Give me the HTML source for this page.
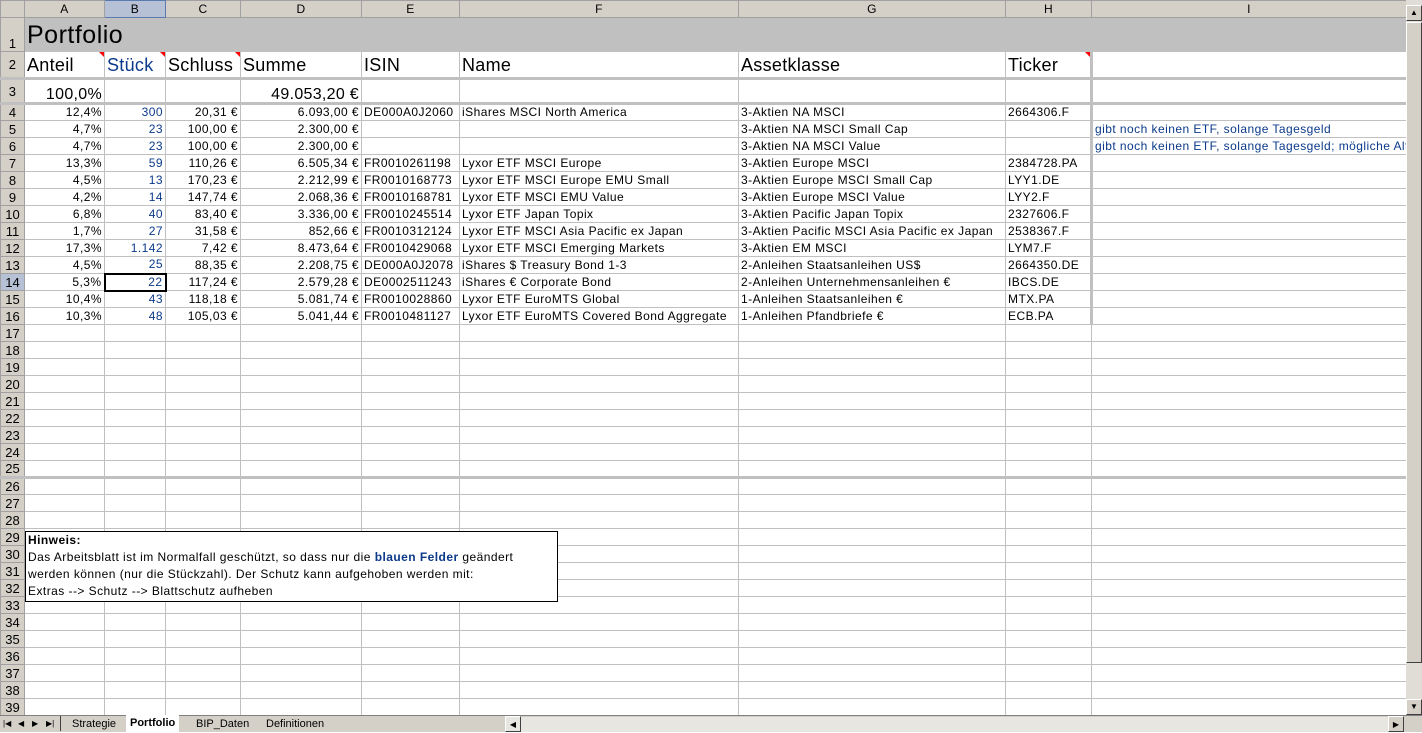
<!DOCTYPE html>
<html><head><meta charset="utf-8"><style>
*{margin:0;padding:0;box-sizing:border-box}
body{width:1422px;height:732px;overflow:hidden;background:#fff;font-family:"Liberation Sans",Arial,sans-serif;position:relative}
table{position:absolute;left:0;top:0;border-collapse:collapse;table-layout:fixed;width:1406px}
td{border:1px solid #c0c0c0;font-size:12px;letter-spacing:0.45px;padding:0 2px;white-space:nowrap;overflow:hidden;height:17px;line-height:15px;color:#000}
td.h{background:#d4d0c8;border:1px solid #a0a0a0;text-align:center;font-size:13px;letter-spacing:0;color:#000;padding:0}
tr.ch td{background:#d4d0c8;border:1px solid #a0a0a0;text-align:center;font-size:12px;height:17px;padding:0}
td.r{text-align:right}
.b{color:#0b3a8a}
tr.r1 td{height:34px}
tr.r2 td{height:27px;font-size:18px;letter-spacing:0.3px;line-height:24px;vertical-align:bottom}
tr.r3 td{height:25px;font-size:16px;letter-spacing:0.3px;border-top:3px solid #c0c0c0;border-bottom:3px solid #c0c0c0;vertical-align:bottom}
tr.r26 td{border-top:3px solid #c0c0c0}
.tri{position:relative}
.tri:after{content:"";position:absolute;right:0;top:0;border-top:5px solid #f00;border-left:5px solid transparent}
.tab{position:absolute;top:0;height:17px}
</style></head><body>
<table>
<colgroup><col style="width:24px"><col style="width:80px"><col style="width:61px"><col style="width:75px"><col style="width:121px"><col style="width:98px"><col style="width:279px"><col style="width:267px"><col style="width:86px"><col style="width:315px"></colgroup>
<tr class="ch"><td></td><td>A</td><td style="background:#b6c1d6;border-color:#5a7ab0">B</td><td>C</td><td>D</td><td>E</td><td>F</td><td>G</td><td>H</td><td>I</td></tr>
<tr class="r1"><td class="h" style="vertical-align:bottom">1</td><td colspan="9" style="background:#c0c0c0;border-color:#c0c0c0;font-size:25px;letter-spacing:0.5px;line-height:30px">Portfolio</td></tr>
<tr class="r2"><td class="h" style="font-size:13px;vertical-align:middle">2</td><td class="tri">Anteil</td><td class="tri b">Stück</td><td class="tri">Schluss</td><td>Summe</td><td>ISIN</td><td>Name</td><td>Assetklasse</td><td class="tri">Ticker</td><td style="border-left:3px solid #c0c0c0"></td></tr>
<tr class="r3"><td class="h" style="font-size:13px;vertical-align:middle">3</td><td class="r">100,0%</td><td></td><td></td><td class="r">49.053,20 €</td><td></td><td></td><td></td><td></td><td style="border-left:3px solid #c0c0c0"></td></tr>
<tr><td class="h">4</td><td class="r">12,4%</td><td class="r b">300</td><td class="r">20,31 €</td><td class="r">6.093,00 €</td><td>DE000A0J2060</td><td>iShares MSCI North America</td><td>3-Aktien NA MSCI</td><td>2664306.F</td><td style="border-left:3px solid #c0c0c0"></td></tr>
<tr><td class="h">5</td><td class="r">4,7%</td><td class="r b">23</td><td class="r">100,00 €</td><td class="r">2.300,00 €</td><td></td><td></td><td>3-Aktien NA MSCI Small Cap</td><td></td><td class="b" style="border-left:3px solid #c0c0c0">gibt noch keinen ETF, solange Tagesgeld</td></tr>
<tr><td class="h">6</td><td class="r">4,7%</td><td class="r b">23</td><td class="r">100,00 €</td><td class="r">2.300,00 €</td><td></td><td></td><td>3-Aktien NA MSCI Value</td><td></td><td class="b" style="border-left:3px solid #c0c0c0">gibt noch keinen ETF, solange Tagesgeld; mögliche Alternative</td></tr>
<tr><td class="h">7</td><td class="r">13,3%</td><td class="r b">59</td><td class="r">110,26 €</td><td class="r">6.505,34 €</td><td>FR0010261198</td><td>Lyxor ETF MSCI Europe</td><td>3-Aktien Europe MSCI</td><td>2384728.PA</td><td style="border-left:3px solid #c0c0c0"></td></tr>
<tr><td class="h">8</td><td class="r">4,5%</td><td class="r b">13</td><td class="r">170,23 €</td><td class="r">2.212,99 €</td><td>FR0010168773</td><td>Lyxor ETF MSCI Europe EMU Small</td><td>3-Aktien Europe MSCI Small Cap</td><td>LYY1.DE</td><td style="border-left:3px solid #c0c0c0"></td></tr>
<tr><td class="h">9</td><td class="r">4,2%</td><td class="r b">14</td><td class="r">147,74 €</td><td class="r">2.068,36 €</td><td>FR0010168781</td><td>Lyxor ETF MSCI EMU Value</td><td>3-Aktien Europe MSCI Value</td><td>LYY2.F</td><td style="border-left:3px solid #c0c0c0"></td></tr>
<tr><td class="h">10</td><td class="r">6,8%</td><td class="r b">40</td><td class="r">83,40 €</td><td class="r">3.336,00 €</td><td>FR0010245514</td><td>Lyxor ETF Japan Topix</td><td>3-Aktien Pacific Japan Topix</td><td>2327606.F</td><td style="border-left:3px solid #c0c0c0"></td></tr>
<tr><td class="h">11</td><td class="r">1,7%</td><td class="r b">27</td><td class="r">31,58 €</td><td class="r">852,66 €</td><td>FR0010312124</td><td>Lyxor ETF MSCI Asia Pacific ex Japan</td><td>3-Aktien Pacific MSCI Asia Pacific ex Japan</td><td>2538367.F</td><td style="border-left:3px solid #c0c0c0"></td></tr>
<tr><td class="h">12</td><td class="r">17,3%</td><td class="r b">1.142</td><td class="r">7,42 €</td><td class="r">8.473,64 €</td><td>FR0010429068</td><td>Lyxor ETF MSCI Emerging Markets</td><td>3-Aktien EM MSCI</td><td>LYM7.F</td><td style="border-left:3px solid #c0c0c0"></td></tr>
<tr><td class="h">13</td><td class="r">4,5%</td><td class="r b">25</td><td class="r">88,35 €</td><td class="r">2.208,75 €</td><td>DE000A0J2078</td><td>iShares $ Treasury Bond 1-3</td><td>2-Anleihen Staatsanleihen US$</td><td>2664350.DE</td><td style="border-left:3px solid #c0c0c0"></td></tr>
<tr><td class="h" style="background:#b6c1d6">14</td><td class="r">5,3%</td><td class="r b" style="border:2px solid #000">22</td><td class="r">117,24 €</td><td class="r">2.579,28 €</td><td>DE0002511243</td><td>iShares € Corporate Bond</td><td>2-Anleihen Unternehmensanleihen €</td><td>IBCS.DE</td><td style="border-left:3px solid #c0c0c0"></td></tr>
<tr><td class="h">15</td><td class="r">10,4%</td><td class="r b">43</td><td class="r">118,18 €</td><td class="r">5.081,74 €</td><td>FR0010028860</td><td>Lyxor ETF EuroMTS Global</td><td>1-Anleihen Staatsanleihen €</td><td>MTX.PA</td><td style="border-left:3px solid #c0c0c0"></td></tr>
<tr><td class="h">16</td><td class="r">10,3%</td><td class="r b">48</td><td class="r">105,03 €</td><td class="r">5.041,44 €</td><td>FR0010481127</td><td>Lyxor ETF EuroMTS Covered Bond Aggregate</td><td>1-Anleihen Pfandbriefe €</td><td>ECB.PA</td><td style="border-left:3px solid #c0c0c0"></td></tr>
<tr><td class="h">17</td><td></td><td></td><td></td><td></td><td></td><td></td><td></td><td></td><td></td></tr>
<tr><td class="h">18</td><td></td><td></td><td></td><td></td><td></td><td></td><td></td><td></td><td></td></tr>
<tr><td class="h">19</td><td></td><td></td><td></td><td></td><td></td><td></td><td></td><td></td><td></td></tr>
<tr><td class="h">20</td><td></td><td></td><td></td><td></td><td></td><td></td><td></td><td></td><td></td></tr>
<tr><td class="h">21</td><td></td><td></td><td></td><td></td><td></td><td></td><td></td><td></td><td></td></tr>
<tr><td class="h">22</td><td></td><td></td><td></td><td></td><td></td><td></td><td></td><td></td><td></td></tr>
<tr><td class="h">23</td><td></td><td></td><td></td><td></td><td></td><td></td><td></td><td></td><td></td></tr>
<tr><td class="h">24</td><td></td><td></td><td></td><td></td><td></td><td></td><td></td><td></td><td></td></tr>
<tr><td class="h">25</td><td></td><td></td><td></td><td></td><td></td><td></td><td></td><td></td><td></td></tr>
<tr class="r26"><td class="h">26</td><td></td><td></td><td></td><td></td><td></td><td></td><td></td><td></td><td></td></tr>
<tr><td class="h">27</td><td></td><td></td><td></td><td></td><td></td><td></td><td></td><td></td><td></td></tr>
<tr><td class="h">28</td><td></td><td></td><td></td><td></td><td></td><td></td><td></td><td></td><td></td></tr>
<tr><td class="h">29</td><td></td><td></td><td></td><td></td><td></td><td></td><td></td><td></td><td></td></tr>
<tr><td class="h">30</td><td></td><td></td><td></td><td></td><td></td><td></td><td></td><td></td><td></td></tr>
<tr><td class="h">31</td><td></td><td></td><td></td><td></td><td></td><td></td><td></td><td></td><td></td></tr>
<tr><td class="h">32</td><td></td><td></td><td></td><td></td><td></td><td></td><td></td><td></td><td></td></tr>
<tr><td class="h">33</td><td></td><td></td><td></td><td></td><td></td><td></td><td></td><td></td><td></td></tr>
<tr><td class="h">34</td><td></td><td></td><td></td><td></td><td></td><td></td><td></td><td></td><td></td></tr>
<tr><td class="h">35</td><td></td><td></td><td></td><td></td><td></td><td></td><td></td><td></td><td></td></tr>
<tr><td class="h">36</td><td></td><td></td><td></td><td></td><td></td><td></td><td></td><td></td><td></td></tr>
<tr><td class="h">37</td><td></td><td></td><td></td><td></td><td></td><td></td><td></td><td></td><td></td></tr>
<tr><td class="h">38</td><td></td><td></td><td></td><td></td><td></td><td></td><td></td><td></td><td></td></tr>
<tr><td class="h">39</td><td></td><td></td><td></td><td></td><td></td><td></td><td></td><td></td><td></td></tr>
</table>
<div style="position:absolute;left:25px;top:531px;width:533px;height:71px;border:1px solid #000;background:#fff;font-size:12px;letter-spacing:0.45px;line-height:17px;padding:0 2px">
<b>Hinweis:</b><br>Das Arbeitsblatt ist im Normalfall geschützt, so dass nur die <b style="color:#0b3a8a">blauen Felder</b> geändert<br>werden können (nur die Stückzahl). Der Schutz kann aufgehoben werden mit:<br>Extras --&gt; Schutz --&gt; Blattschutz aufheben</div>
<div style="position:absolute;left:1406px;top:0;width:16px;height:715px;background:#e0ddd6">
<div style="position:absolute;left:0;top:5px;width:16px;height:16px;background:#d4d0c8;border:1px solid;border-color:#fff #404040 #404040 #fff;font-size:8px;text-align:center;line-height:13px">▲</div>
<div style="position:absolute;left:0;top:22px;width:16px;height:641px;background:#d4d0c8;border:1px solid;border-color:#fff #404040 #404040 #fff"></div>
<div style="position:absolute;left:0;top:699px;width:16px;height:16px;background:#d4d0c8;border:1px solid;border-color:#fff #404040 #404040 #fff;font-size:8px;text-align:center;line-height:13px">▼</div>
</div>
<div style="position:absolute;left:0;top:715px;width:1422px;height:17px;background:#d4d0c8;font-size:11px;line-height:16px;border-top:1px solid #808080">
<span class="tab" style="left:3px;font-size:8px">|◀</span>
<span class="tab" style="left:18px;font-size:8px">◀</span>
<span class="tab" style="left:32px;font-size:8px">▶</span>
<span class="tab" style="left:46px;font-size:8px">▶|</span>
<span class="tab" style="left:60px;width:1px;background:#404040;height:15px"></span>
<span class="tab" style="left:72px">Strategie</span>
<span class="tab" style="left:126px;top:-1px;background:#fff;padding:0 4px 0 4px;font-weight:bold">Portfolio</span>
<span class="tab" style="left:196px">BIP_Daten</span>
<span class="tab" style="left:266px">Definitionen</span>
<div style="position:absolute;left:505px;top:1px;width:883px;height:15px;background:#e8e6e0"></div>
<div style="position:absolute;left:505px;top:0;width:16px;height:16px;border:1px solid;border-color:#fff #404040 #404040 #fff;font-size:8px;text-align:center">◀</div>
<div style="position:absolute;left:1388px;top:0;width:16px;height:16px;border:1px solid;border-color:#fff #404040 #404040 #fff;font-size:8px;text-align:center">▶</div>
</div>
</body></html>
